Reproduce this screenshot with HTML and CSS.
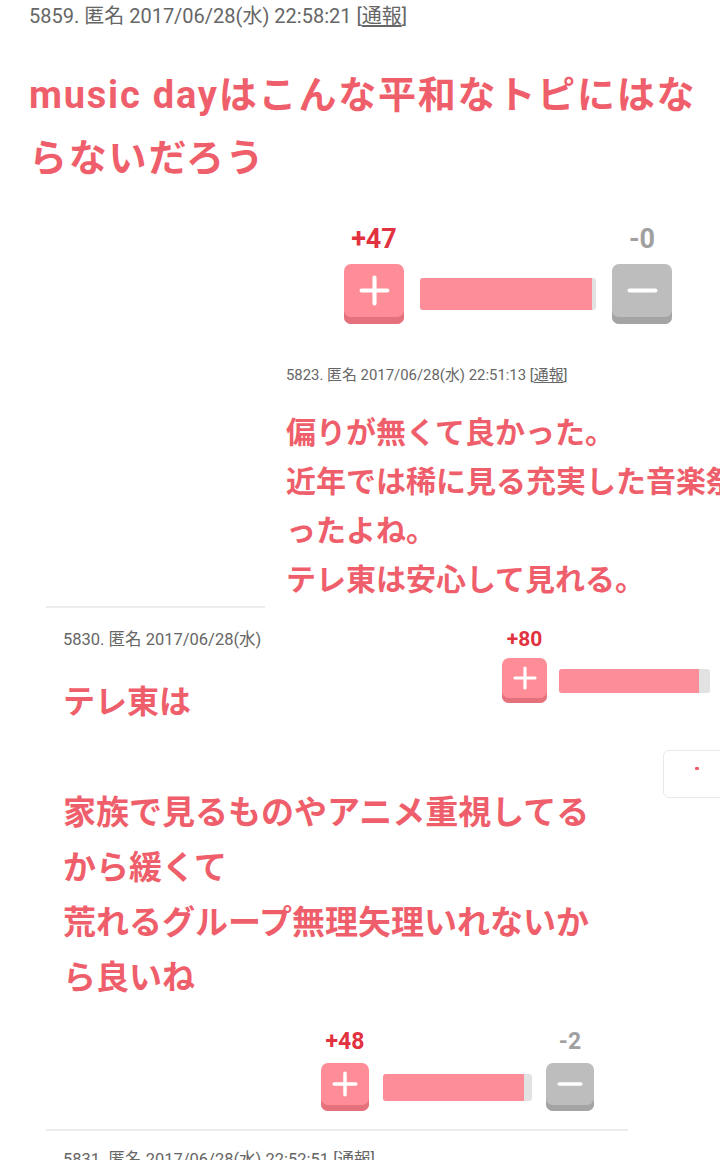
FILE: index.html
```html
<!DOCTYPE html>
<html lang="ja">

<head>
    <meta charset="UTF-8">
    <meta name="viewport" content="width=device-width, initial-scale=1.0">
    <title>music day トピ</title>
    <link rel="stylesheet" href="styles.css">
</head>

<body>
    <div class="page">
        <!-- 5859 -->
        <section class="post post-top">
            <div class="meta meta-lg">5859. 匿名 2017/06/28(水) 22:58:21 [<u>通報</u>]</div>
            <p class="comment comment-title">music dayはこんな平和なトピにはな<br>らないだろう</p>
            <div class="vote vote-lg">
                <span class="count count-up">+47</span>
                <span class="count count-down">-0</span>
                <button class="btn btn-plus">
                    <svg viewBox="0 0 24 24"><path d="M12 2v20M2 12h20" /></svg>
                </button>
                <div class="bar"><div class="bar-fill" style="width: 97.7%"></div></div>
                <button class="btn btn-minus">
                    <svg viewBox="0 0 24 24"><path d="M2 12h20" /></svg>
                </button>
            </div>
        </section>

        <!-- cut-out pieces pasted on top of each other -->
        <div class="collage">
            <div class="clip clip-5823">
                <div class="meta meta-sm">5823. 匿名 2017/06/28(水) 22:51:13 [<u>通報</u>]</div>
                <p class="comment comment-md">偏りが無くて良かった。<br>近年では稀に見る充実した音楽祭<br>ったよね。<br>テレ東は安心して見れる。</p>
            </div>

            <div class="clip clip-5830">
                <div class="meta meta-md">5830. 匿名 2017/06/28(水)</div>
                <p class="comment comment-short">テレ東は</p>
            </div>

            <div class="clip clip-vote80">
                <div class="vote vote-sm">
                    <span class="count count-up">+80</span>
                    <button class="btn btn-plus">
                        <svg viewBox="0 0 24 24"><path d="M12 2v20M2 12h20" /></svg>
                    </button>
                    <div class="bar"><div class="bar-fill" style="width: 92.7%"></div></div>
                </div>
            </div>

            <div class="clip clip-box"><span class="dot"></span></div>
        </div>

        <!-- 家族で… -->
        <section class="post post-bottom">
            <div class="post-inner">
                <p class="comment comment-lg">家族で見るものやアニメ重視してる<br>から緩くて<br>荒れるグループ無理矢理いれないか<br>ら良いね</p>
                <div class="vote vote-md">
                    <span class="count count-up">+48</span>
                    <span class="count count-down">-2</span>
                    <button class="btn btn-plus">
                        <svg viewBox="0 0 24 24"><path d="M12 2v20M2 12h20" /></svg>
                    </button>
                    <div class="bar"><div class="bar-fill" style="width: 94.6%"></div></div>
                    <button class="btn btn-minus">
                        <svg viewBox="0 0 24 24"><path d="M2 12h20" /></svg>
                    </button>
                </div>
            </div>
        </section>
        <div class="meta meta-next">5831. 匿名 2017/06/28(水) 22:52:51 [<u>通報</u>]</div>
    </div>
</body>

</html>
```

FILE: styles.css
```css
body {
    margin: 0;
    background-color: #fff;
    font-family: Roboto, "Noto Sans CJK JP", sans-serif;
}

.page {
    width: 720px;
    height: 1160px;
    overflow: hidden;
}

p {
    margin: 0;
}

/* post header line */
.meta {
    color: #666;
    white-space: nowrap;
}

.meta u {
    text-decoration: underline;
    text-underline-offset: 2px;
}

.meta-lg {
    font-size: 20px;
    line-height: 24px;
}

.meta-md {
    font-size: 16.5px;
    line-height: 20px;
}

.meta-sm {
    font-size: 14.9px;
    line-height: 20px;
}

.meta-next {
    font-size: 16.5px;
    line-height: 22px;
    margin: 18px 0 0 63px;
}

/* big pink comment text */
.comment {
    color: #ef5f6b;
    font-family: "Noto Sans CJK JP", sans-serif;
    font-weight: 700;
    white-space: nowrap;
}

.comment-title {
    font-family: Roboto, "Noto Sans CJK JP", sans-serif;
    font-size: 38px;
    line-height: 63px;
    letter-spacing: 1.8px;
    margin-top: 35.5px;
}

.comment-md {
    font-size: 30px;
    line-height: 49px;
    margin-top: 21px;
}

.comment-short {
    font-size: 32px;
    line-height: 44px;
    margin: 27px 0 0 17px;
}

.comment-lg {
    font-size: 33px;
    line-height: 55px;
}

.post-top {
    padding: 4px 0 0 29px;
    height: 326px;
}

/* plus / minus voting */
.vote {
    display: grid;
    grid-template-columns: var(--btn) var(--bar) var(--btn);
    column-gap: var(--gap);
    row-gap: var(--row-gap);
    align-items: center;
}

.vote-lg {
    --btn: 60px;
    --btn-edge: 7px;
    --bar: 176px;
    --bar-h: 32px;
    --gap: 16px;
    --row-gap: 11px;
    --icon: 31px;
    font-size: 27px;
    line-height: 28px;
    margin: 35.5px 0 0 315px;
}

.vote-md {
    --btn: 48px;
    --btn-edge: 6px;
    --bar: 149px;
    --bar-h: 27px;
    --gap: 14px;
    --row-gap: 9px;
    --icon: 26px;
    font-size: 23px;
    line-height: 24px;
    margin: 27.5px 0 0 258px;
}

.vote-sm {
    --btn: 45px;
    --btn-edge: 5px;
    --bar: 151px;
    --bar-h: 24px;
    --gap: 12px;
    --row-gap: 8px;
    --icon: 24px;
    grid-template-columns: var(--btn) var(--bar);
    font-size: 21px;
    line-height: 22px;
}

.count {
    grid-row: 1;
    text-align: center;
    font-weight: 700;
}

.count-up {
    grid-column: 1;
    color: #e2323f;
}

.count-down {
    grid-column: 3;
    color: #a0a0a0;
}

.btn {
    grid-row: 2;
    width: var(--btn);
    height: var(--btn);
    border: none;
    border-radius: 7px;
    padding: 0 0 var(--btn-edge);
    display: flex;
    align-items: center;
    justify-content: center;
    cursor: pointer;
}

.btn svg {
    width: var(--icon);
    height: var(--icon);
}

.btn path {
    stroke: #fff;
    stroke-width: 3.2;
    stroke-linecap: round;
    fill: none;
}

.btn-plus {
    grid-column: 1;
    background-color: #fe8d98;
    box-shadow: inset 0 calc(var(--btn-edge) * -1) 0 #e5717d;
}

.btn-minus {
    grid-column: 3;
    background-color: #bdbdbd;
    box-shadow: inset 0 calc(var(--btn-edge) * -1) 0 #a4a4a4;
}

.bar {
    grid-row: 2;
    grid-column: 2;
    height: var(--bar-h);
    background-color: #e2e2e2;
    border-radius: 3px;
    overflow: hidden;
}

.bar-fill {
    height: 100%;
    background-color: #fd8e99;
}

/* pasted pieces */
.collage {
    position: relative;
    height: 450px;
}

.clip {
    position: absolute;
    background-color: #fff;
}

.clip-5823 {
    left: 286px;
    top: 35px;
}

.clip-5830 {
    left: 46px;
    top: 276px;
    width: 219px;
    border-top: 2px solid #ececec;
    padding-top: 22px;
}

.clip-5830 .meta {
    padding-left: 17px;
}

.clip-vote80 {
    left: 502px;
    top: 298px;
}

.clip-box {
    left: 663px;
    top: 420px;
    width: 70px;
    height: 46px;
    border: 1px solid #e9e9e9;
    border-radius: 6px;
}

.dot {
    position: absolute;
    left: 31px;
    top: 16px;
    width: 4px;
    height: 3px;
    background-color: #ef5f6b;
    border-radius: 1px;
}

.post-bottom {
    margin-left: 46px;
    width: 582px;
    border-bottom: 2px solid #ececec;
    padding: 2.5px 0 18px;
}

.post-inner {
    padding-left: 17px;
}
```
